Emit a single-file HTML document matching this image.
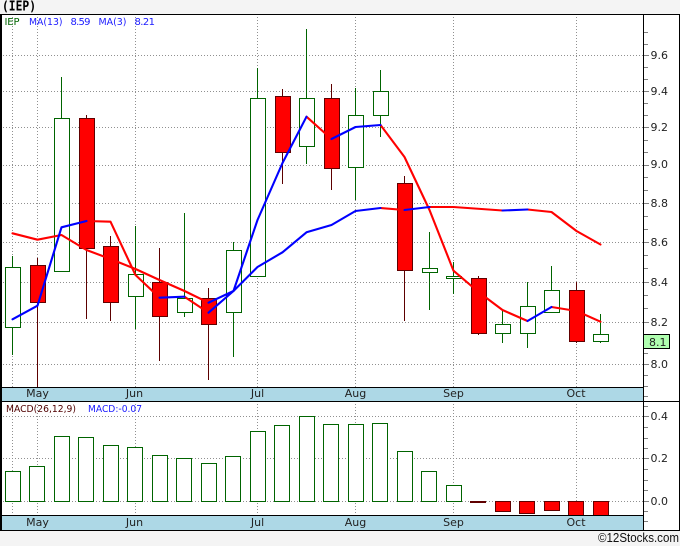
<!DOCTYPE html>
<html>
<head>
<meta charset="utf-8">
<style>
html,body{margin:0;padding:0;background:#f4f4f4;width:680px;height:546px;overflow:hidden}
svg{display:block}
text{font-family:"DejaVu Sans",sans-serif;font-size:11px;fill:#222}
.m{text-anchor:middle}
.l{font-size:10px}
</style>
</head>
<body>
<svg width="680" height="546" viewBox="0 0 680 546" xmlns="http://www.w3.org/2000/svg">
<rect x="0" y="14" width="680" height="517" fill="#fff"/>
<text x="2" y="10.5" textLength="34" lengthAdjust="spacingAndGlyphs" style="font-family:'DejaVu Sans Mono',monospace;font-weight:bold;font-size:13px;fill:#000">(IEP)</text>

<!-- grid -->
<path fill="none" stroke="#909090" stroke-dasharray="1 2" d="M0 55.5H643M0 91.5H643M0 127.5H643M0 165.5H643M0 203.5H643M0 242.5H643M0 282.5H643M0 322.5H643M0 364.5H643M12.5 14V387M37.5 14V387M135.5 14V387M257.5 14V387M355.5 14V387M453.5 14V387M576.5 14V387M0 416.5H643M0 458.5H643M0 501.5H643M12.5 401V515M37.5 401V515M135.5 401V515M257.5 401V515M355.5 401V515M453.5 401V515M576.5 401V515"/>

<!-- wicks -->
<path fill="none" stroke="#006400" d="M12.5 256V355M61.5 77V271M135.5 226V329M184.5 213V317M233.5 242V357M257.5 68V277M306.5 29V164M355.5 88V200M380.5 70V137M429.5 232V310M453.5 262V294M502.5 310V343M527.5 282V348M551.5 266V312M600.5 314V343"/>
<path fill="none" stroke="#5c0000" d="M37.5 258V387M86.5 115V319M110.5 236V321M159.5 248V361M208.5 288V380M282.5 89V184M331.5 84V190M404.5 176V321M478.5 276V335M576.5 282V343"/>

<!-- green bodies -->
<g fill="#fff" stroke="#006400">
<rect x="5.5" y="267.5" width="15" height="60"/>
<rect x="54.5" y="118.5" width="15" height="153"/>
<rect x="128.5" y="274.5" width="15" height="22"/>
<rect x="177.5" y="298.5" width="15" height="14"/>
<rect x="226.5" y="250.5" width="15" height="62"/>
<rect x="250.5" y="98.5" width="15" height="178"/>
<rect x="299.5" y="98.5" width="15" height="48"/>
<rect x="348.5" y="115.5" width="15" height="52"/>
<rect x="373.5" y="91.5" width="15" height="24"/>
<rect x="422.5" y="268.5" width="15" height="4"/>
<rect x="446.5" y="276.5" width="15" height="2"/>
<rect x="495.5" y="324.5" width="15" height="9"/>
<rect x="520.5" y="306.5" width="15" height="27"/>
<rect x="544.5" y="290.5" width="15" height="22"/>
<rect x="593.5" y="334.5" width="15" height="7"/>
</g>
<!-- red bodies -->
<g fill="#f00" stroke="#600000">
<rect x="30.5" y="265.5" width="15" height="37"/>
<rect x="79.5" y="118.5" width="15" height="130"/>
<rect x="103.5" y="246.5" width="15" height="56"/>
<rect x="152.5" y="282.5" width="15" height="34"/>
<rect x="201.5" y="298.5" width="15" height="26"/>
<rect x="275.5" y="96.5" width="15" height="56"/>
<rect x="324.5" y="98.5" width="15" height="70"/>
<rect x="397.5" y="183.5" width="15" height="87"/>
<rect x="471.5" y="278.5" width="15" height="55"/>
<rect x="569.5" y="290.5" width="15" height="51"/>
</g>

<!-- moving averages -->
<g fill="none" stroke-width="2.1" stroke-linejoin="round" stroke-linecap="round">
<g stroke="#f00">
<path d="M12.5 233.3L37.5 239.7L61.5 235L86.5 250L110.5 259L135.5 269L159.5 280L184.5 291L208.5 302.7"/>
<path d="M380.5 208L404.5 210"/>
<path d="M429.5 207L453.5 207L502.5 210.5"/>
<path d="M527.5 209.5L551.5 212L576.5 231L600.5 244.5"/>
<path d="M86.5 221L110.5 221.7L135.5 275L159.5 297.7"/>
<path d="M184.5 296.7L208.5 312.7"/>
<path d="M306.5 116.7L331.5 139"/>
<path d="M380.5 125L404.5 157L429.5 210L453.5 270.7L478.5 292L502.5 310L527.5 321"/>
<path d="M551.5 307L576.5 311L600.5 321.7"/>
</g>
<g stroke="#00f">
<path d="M208.5 302.7L233.5 291L257.5 267L282.5 252.3L306.5 232.3L331.5 225L355.5 211L380.5 208"/>
<path d="M404.5 210L429.5 207"/>
<path d="M502.5 210.5L527.5 209.5"/>
<path d="M12.5 319.3L37.5 305.7L61.5 227.3L86.5 221"/>
<path d="M159.5 297.7L184.5 296.7"/>
<path d="M208.5 312.7L233.5 291L257.5 220L282.5 163L306.5 116.7"/>
<path d="M331.5 139L355.5 127L380.5 125"/>
<path d="M527.5 321L551.5 307"/>
</g>
</g>

<!-- MACD bars -->
<g fill="#fff" stroke="#006400">
<rect x="5.5" y="471.5" width="15" height="30"/>
<rect x="29.5" y="466.5" width="15" height="35"/>
<rect x="54.5" y="436.5" width="15" height="65"/>
<rect x="78.5" y="437.5" width="15" height="64"/>
<rect x="103.5" y="445.5" width="15" height="56"/>
<rect x="127.5" y="447.5" width="15" height="54"/>
<rect x="152.5" y="455.5" width="15" height="46"/>
<rect x="176.5" y="458.5" width="15" height="43"/>
<rect x="201.5" y="463.5" width="15" height="38"/>
<rect x="225.5" y="456.5" width="15" height="45"/>
<rect x="250.5" y="431.5" width="15" height="70"/>
<rect x="274.5" y="425.5" width="15" height="76"/>
<rect x="299.5" y="416.5" width="15" height="85"/>
<rect x="323.5" y="424.5" width="15" height="77"/>
<rect x="348.5" y="424.5" width="15" height="77"/>
<rect x="372.5" y="423.5" width="15" height="78"/>
<rect x="397.5" y="451.5" width="15" height="50"/>
<rect x="421.5" y="471.5" width="15" height="30"/>
<rect x="446.5" y="485.5" width="15" height="16"/>
</g>
<g fill="#f00" stroke="#600000">
<rect x="470.5" y="501.5" width="15" height="1"/>
<rect x="495.5" y="501.5" width="15" height="10"/>
<rect x="519.5" y="501.5" width="15" height="12"/>
<rect x="544.5" y="501.5" width="15" height="9"/>
<rect x="568.5" y="501.5" width="15" height="14"/>
<rect x="593.5" y="501.5" width="15" height="14"/>
</g>

<!-- date strips -->
<rect x="0" y="388" width="643" height="13" fill="#add8e6"/>
<rect x="0" y="516" width="643" height="14" fill="#add8e6"/>

<!-- ticks -->
<path fill="none" stroke="#808080" d="M644 32.5h4M644 44.5h4M644 55.5h5M644 67.5h4M644 79.5h4M644 91.5h5M644 103.5h4M644 115.5h4M644 127.5h5M644 140.5h4M644 152.5h4M644 165.5h5M644 177.5h4M644 190.5h4M644 203.5h5M644 216.5h4M644 229.5h4M644 242.5h5M644 255.5h4M644 268.5h4M644 282.5h5M644 295.5h4M644 308.5h4M644 322.5h5M644 353.5h4M644 364.5h5M644 375.5h4M644 386.5h4M644 396.5h4M644 406.5h4M644 416.5h5M644 427.5h4M644 438.5h4M644 448.5h4M644 458.5h5M644 469.5h4M644 480.5h4M644 490.5h4M644 501.5h5M644 511.5h4M644 521.5h4"/>

<!-- frame -->
<path fill="none" stroke="#000" d="M0 14.5H680M643.5 14V531M679.5 14V531M0 387.5H643M0 401.5H680M0 515.5H643M0 530.5H680"/>
<rect x="0" y="14" width="2" height="517" fill="#000"/>

<!-- price box -->
<rect x="643.5" y="334.5" width="26" height="14" fill="#b0ffb0" stroke="#000"/>
<text x="649" y="346">8.1</text>

<!-- y labels -->
<text x="650.5" y="59">9.6</text>
<text x="650.5" y="95">9.4</text>
<text x="650.5" y="131">9.2</text>
<text x="650.5" y="168">9.0</text>
<text x="650.5" y="207">8.8</text>
<text x="650.5" y="246">8.6</text>
<text x="650.5" y="286">8.4</text>
<text x="650.5" y="326">8.2</text>
<text x="650.5" y="368">8.0</text>
<text x="650.5" y="420">0.4</text>
<text x="650.5" y="462">0.2</text>
<text x="650.5" y="505">0.0</text>

<!-- months -->
<text class="m" x="37.5" y="397">May</text>
<text class="m" x="134.5" y="397">Jun</text>
<text class="m" x="257.5" y="397">Jul</text>
<text class="m" x="355.5" y="397">Aug</text>
<text class="m" x="453.5" y="397">Sep</text>
<text class="m" x="576" y="397">Oct</text>
<text class="m" x="37.5" y="526">May</text>
<text class="m" x="134.5" y="526">Jun</text>
<text class="m" x="257.5" y="526">Jul</text>
<text class="m" x="355.5" y="526">Aug</text>
<text class="m" x="453.5" y="526">Sep</text>
<text class="m" x="576" y="526">Oct</text>

<!-- legends -->
<text class="l" x="4.5" y="25" style="fill:#006400" textLength="15">IEP</text>
<text class="l" x="29" y="25" style="fill:#1a1aff" textLength="33.5" lengthAdjust="spacingAndGlyphs">MA(13)</text>
<text class="l" x="70.5" y="25" style="fill:#1a1aff" textLength="20">8.59</text>
<text class="l" x="98.5" y="25" style="fill:#1a1aff" textLength="28" lengthAdjust="spacingAndGlyphs">MA(3)</text>
<text class="l" x="134.5" y="25" style="fill:#1a1aff" textLength="20.5">8.21</text>
<text class="l" x="6" y="412" style="fill:#500000" textLength="70" lengthAdjust="spacingAndGlyphs">MACD(26,12,9)</text>
<text class="l" x="88" y="412" style="fill:#1a1aff" textLength="54" lengthAdjust="spacingAndGlyphs">MACD:-0.07</text>

<text x="598" y="542" textLength="81" lengthAdjust="spacingAndGlyphs" style="font-family:'Liberation Sans',sans-serif;font-size:13px;fill:#111">©12Stocks.com</text>
</svg>
</body>
</html>
